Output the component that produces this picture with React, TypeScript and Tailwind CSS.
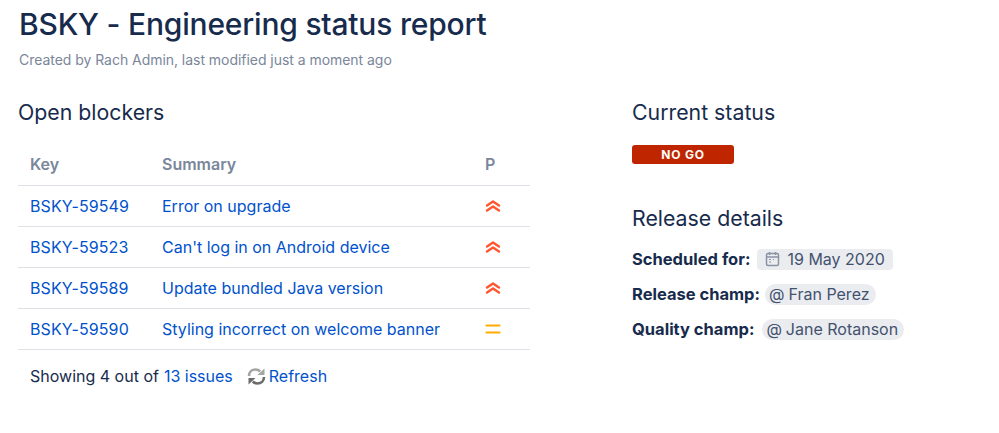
const issues = [
  { key: "BSKY-59549", summary: "Error on upgrade", priority: "high" },
  { key: "BSKY-59523", summary: "Can't log in on Android device", priority: "high" },
  { key: "BSKY-59589", summary: "Update bundled Java version", priority: "high" },
  { key: "BSKY-59590", summary: "Styling incorrect on welcome banner", priority: "medium" },
];

function PriorityIcon({ priority }: { priority: string }) {
  if (priority === "medium") {
    return (
      <svg width="16" height="16" viewBox="0 0 16 16" fill="none">
        <path d="M1.5 4.5h13M1.5 11.500h13" stroke="#ffab00" strokeWidth="2.2" strokeLinecap="round" />
      </svg>
    );
  }
  return (
    <svg width="16" height="16" viewBox="0 0 16 16" fill="none">
      <path d="M2 7.5L8 3.5L14 7.5M2 12.5L8 8.5L14 12.5" stroke="#ff5630" strokeWidth="2.4" strokeLinecap="round" strokeLinejoin="round" />
    </svg>
  );
}

function CalendarIcon() {
  return (
    <svg width="16" height="16" viewBox="0 0 16 16" fill="none">
      <rect x="1.5" y="2.5" width="12" height="12" rx="1.5" stroke="#8993a4" strokeWidth="1.5" />
      <path d="M1.5 6h12M4.5 1v3M10.5 1v3" stroke="#8993a4" strokeWidth="1.5" />
      <path d="M4 8.5h2M8 8.5h1M4 11h2" stroke="#8993a4" strokeWidth="1.2" />
    </svg>
  );
}

function RefreshIcon() {
  return (
    <svg width="19" height="19" viewBox="0 0 19 19" fill="none">
      <path d="M2 9C2 5 5 2.5 8.5 2.5c2 0 3.500.7 4.700 2" stroke="#a5a5a5" strokeWidth="2.600" />
      <path d="M10.500 8h7V1.500z" fill="#a5a5a5" />
      <path d="M17 10c0 4-3 6.500-6.500 6.500-2 0-3.500-.7-4.700-2" stroke="#6b6b6b" strokeWidth="2.600" />
      <path d="M8.500 11h-7v6.500z" fill="#6b6b6b" />
    </svg>
  );
}

function Mention({ name }: { name: string }) {
  return (
    <span className="inline-flex h-[21px] items-center gap-[4px] rounded-full bg-[#ebecf0] pr-[6px] pl-[4px] text-[16px] text-[#42526e]">
      <span>@</span>
      {name}
    </span>
  );
}

export default function App() {
  return (
    <div className="h-[433px] w-[999px] overflow-hidden bg-white pt-[4px] pl-[18px] font-['Inter',sans-serif] text-[#172b4d]">
      <h1 className="pl-[1px] text-[30px] leading-[40px] font-medium tracking-[-0.2px] text-[#172b4d]">BSKY - Engineering status report</h1>
      <p className="mt-[6px] pl-[1px] text-[14px] leading-[20px] tracking-[-0.04px] text-[#7a869a]">Created by Rach Admin, last modified just a moment ago</p>

      <div className="mt-[28px] flex">
        <div className="w-[512px]">
          <h2 className="text-[21.3px] leading-[28px] text-[#172b4d]">Open blockers</h2>

          <div className="mt-[17px] flex h-[43px] items-center border-b border-[#dfe1e6] text-[16px] font-semibold text-[#7a869a]">
            <span className="w-[144px] pl-[12px]">Key</span>
            <span className="w-[323px]">Summary</span>
            <span>P</span>
          </div>

          {issues.map((issue) => (
            <div key={issue.key} className="flex h-[41px] items-center border-b border-[#dfe1e6] text-[16px] text-[#0052cc]">
              <span className="w-[144px] pl-[12px] tracking-[0.1px]">{issue.key}</span>
              <span className="w-[323px]">{issue.summary}</span>
              <PriorityIcon priority={issue.priority} />
            </div>
          ))}

          <div className="mt-[15px] flex items-center pl-[12px] text-[16px] leading-[22px]">
            <span>Showing 4 out of</span>
            <span className="ml-[5px] text-[#0052cc]">13 issues</span>
            <span className="mr-[3px] ml-[14px]">
              <RefreshIcon />
            </span>
            <span className="text-[#0052cc]">Refresh</span>
          </div>
        </div>

        <div className="ml-[102px]">
          <h2 className="text-[21.3px] leading-[28px] text-[#172b4d]">Current status</h2>
          <div className="mt-[19px] flex h-[19px] w-[102px] items-center justify-center rounded-[3px] bg-[#bf2600] text-[12px] font-bold tracking-[0.8px] text-white">NO GO</div>

          <h2 className="mt-[40px] text-[21.3px] leading-[28px] text-[#172b4d]">Release details</h2>

          <div className="mt-[16px] flex items-center text-[16.5px] leading-[22px] font-bold">
            <span>Scheduled for:</span>
            <span className="ml-[7px] inline-flex h-[21px] items-center gap-[6px] rounded-[4px] bg-[#ebecf0] px-[8px] text-[16px] font-normal text-[#42526e]">
              <CalendarIcon />
              19 May 2020
            </span>
          </div>
          <div className="mt-[13px] flex items-center text-[16.5px] leading-[22px] font-bold">
            <span>Release champ:</span>
            <span className="ml-[5px] font-normal">
              <Mention name="Fran Perez" />
            </span>
          </div>
          <div className="mt-[13px] flex items-center text-[16.5px] leading-[22px] font-bold">
            <span>Quality champ:</span>
            <span className="ml-[8px] font-normal">
              <Mention name="Jane Rotanson" />
            </span>
          </div>
        </div>
      </div>
    </div>
  );
}
